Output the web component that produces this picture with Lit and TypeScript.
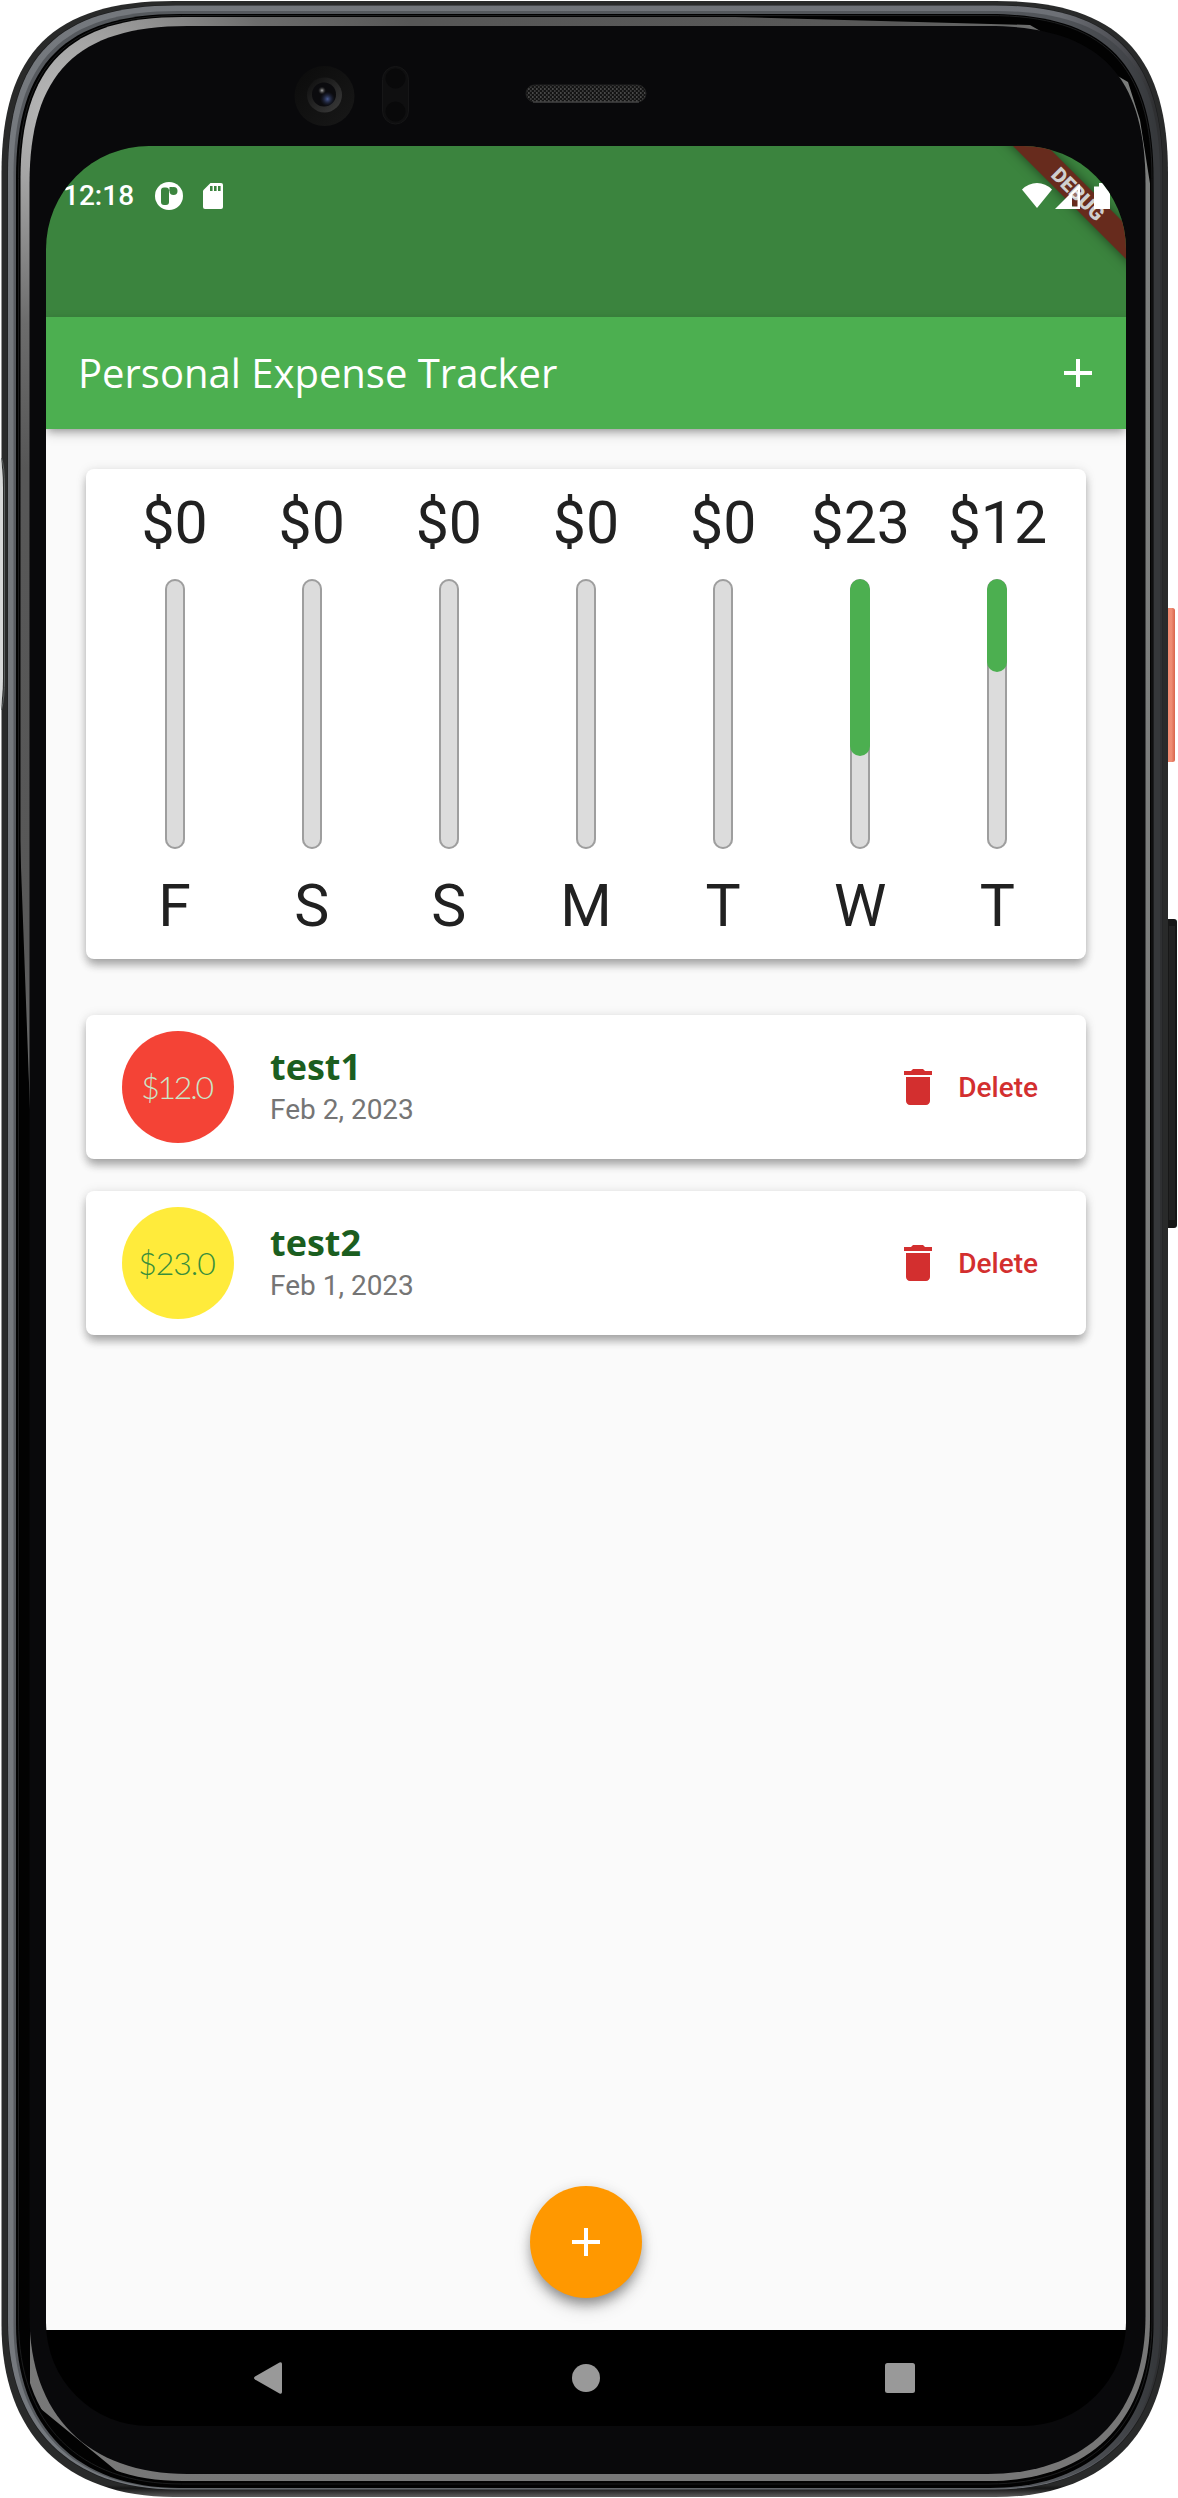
import { LitElement, html, svg, css } from "lit";
import { customElement, property } from "lit/decorators.js";

interface Transaction {
  title: string;
  amount: string;
  date: string;
  tone: "red" | "yellow";
}

interface DayTotal {
  label: string;
  total: number;
}

/** Closed outline with soft corners; kt and kb set how square the top and bottom corners are. */
function outline(x0: number, y0: number, x1: number, y1: number, r: number, kt = 0.7, kb = 0.63): string {
  const t = r * (1 - kt);
  const b = r * (1 - kb);
  return [
    `M${x0 + r} ${y0}H${x1 - r}`,
    `C${x1 - t} ${y0} ${x1} ${y0 + t} ${x1} ${y0 + r}`,
    `V${y1 - r}`,
    `C${x1} ${y1 - b} ${x1 - b} ${y1} ${x1 - r} ${y1}`,
    `H${x0 + r}`,
    `C${x0 + b} ${y1} ${x0} ${y1 - b} ${x0} ${y1 - r}`,
    `V${y0 + r}`,
    `C${x0} ${y0 + t} ${x0 + t} ${y0} ${x0 + r} ${y0}Z`,
  ].join("");
}

const plusIcon = html`<svg width="48" height="48" viewBox="0 0 24 24" fill="#fff">
  <path d="M19 13h-6v6h-2v-6H5v-2h6V5h2v6h6v2z" />
</svg>`;

@customElement("phone-body")
export class PhoneBody extends LitElement {
  static styles = css`
    :host { display: block; width: 1178px; height: 2498px; }
    svg { display: block; }
  `;

  render() {
    return html`<svg width="1178" height="2498" viewBox="0 0 1178 2498">
      ${svg`
      <defs>
        <linearGradient id="rim" gradientUnits="userSpaceOnUse" x1="0" y1="0" x2="1178" y2="0">
          <stop offset="0" stop-color="#75797e" /><stop offset=".9" stop-color="#6d7076" />
          <stop offset=".955" stop-color="#4a4b50" /><stop offset=".98" stop-color="#2f3032" />
        </linearGradient>
        <linearGradient id="shell" gradientUnits="userSpaceOnUse" x1="0" y1="2485" x2="0" y2="2498">
          <stop offset="0" stop-color="#292a2a" /><stop offset=".25" stop-color="#161616" />
          <stop offset="1" stop-color="#666" />
        </linearGradient>
        <radialGradient id="shine" gradientUnits="userSpaceOnUse" cx="60" cy="110" r="2400">
          <stop offset="0" stop-color="#b8b8b8" /><stop offset=".03" stop-color="#a5a5a5" />
          <stop offset=".09" stop-color="#6c6c6c" /><stop offset=".15" stop-color="#575757" />
          <stop offset=".35" stop-color="#585858" /><stop offset=".45" stop-color="#7c7e7d" />
          <stop offset="1" stop-color="#777" />
        </radialGradient>
        <linearGradient id="power" x1="0" y1="0" x2="1" y2="0">
          <stop offset="0" stop-color="#d9634c" /><stop offset=".3" stop-color="#ef8268" />
          <stop offset=".75" stop-color="#f08e75" /><stop offset="1" stop-color="#d9654d" />
        </linearGradient>
        <linearGradient id="housing" x1="0" y1="0" x2="1" y2="1">
          <stop offset="0" stop-color="#0b0b0b" /><stop offset="1" stop-color="#181818" />
        </linearGradient>
        <linearGradient id="lensring" x1="0" y1="0" x2="1" y2="1">
          <stop offset="0" stop-color="#0d0d0d" /><stop offset="1" stop-color="#3c3c3c" />
        </linearGradient>
        <radialGradient id="blue"><stop offset="0" stop-color="#4a5c94" /><stop offset="1" stop-color="#1a2038" stop-opacity="0" /></radialGradient>
        <radialGradient id="glint"><stop offset="0" stop-color="#aaa" /><stop offset="1" stop-color="#333" stop-opacity="0" /></radialGradient>
        <pattern id="mesh" width="4" height="4" patternUnits="userSpaceOnUse">
          <rect width="4" height="4" fill="#141414" />
          <rect width="1.600" height="2" fill="#484848" /><rect x="2" y="2" width="1.600" height="2" fill="#3a3a3a" />
        </pattern>
        <mask id="shinemask" maskUnits="userSpaceOnUse" x="0" y="0" width="1178" height="2498">
          <rect width="1178" height="2498" fill="#fff" />
          <path d="M20 840L30 1110V2400L130 2482L60 2498H0V840Z" fill="#000" />
          <path d="M620 14L1030 25L1128 82L1140 120L1151 190L1178 190V0H620Z" fill="#000" />
        </mask>
      </defs>
      <rect x="1160" y="608" width="15" height="154" rx="2.500" fill="url(#power)" />
      <rect x="1160" y="919" width="17" height="309" rx="3" fill="#171717" />
      <rect x="1169" y="926" width="6" height="294" fill="#222" />
      <path d=${outline(1.5, 1, 1168, 2497, 172)} fill="url(#shell)" />
      <path d=${outline(7.5, 5, 1163, 2490, 168)} fill="#1b1c1d" />
      <path d=${outline(8, 5.5, 1162.5, 2489.5, 168)} fill="url(#rim)" />
      <path d=${outline(13.5, 11, 1160, 2488.5, 164)} fill="#3d3f43" opacity=".55" />
      <path d=${outline(16, 14, 1153.5, 2488, 164)} fill="#020202" />
      <path d=${outline(18.5, 15.5, 1152, 2484, 163)} fill="none" stroke="#1c1d1e" stroke-width="1" />
      <path d=${outline(20.5, 17, 1150, 2481, 162)} fill="url(#shine)" mask="url(#shinemask)" />
      <path d=${outline(29.5, 26, 1145.5, 2474, 158)} fill="#09090b" />
      <path d="M0 458q3 8 3 30v190q0 20-3 32z" fill="#d8dada" />
      <path d="M1.500 458q3 8 3 30v190q0 20-3 32" fill="none" stroke="#5c6161" stroke-width="1" />
      <circle cx="324.500" cy="96" r="30" fill="url(#housing)" />
      <circle cx="324.500" cy="95" r="17.500" fill="url(#lensring)" />
      <circle cx="324" cy="94.500" r="12" fill="#0b0b0e" />
      <circle cx="327.500" cy="99" r="7.500" fill="url(#blue)" />
      <circle cx="322" cy="90.500" r="4" fill="url(#glint)" />
      <rect x="382.500" y="66.500" width="26" height="57.500" rx="13" fill="#0f0f10" stroke="#161617" />
      <circle cx="395.500" cy="78.500" r="10" fill="#09090a" />
      <circle cx="395.500" cy="111.500" r="10" fill="#09090a" />
      <rect x="526" y="85" width="120" height="17" rx="8.500" fill="url(#mesh)" stroke="#222" />
      <path d="M533 102h106" stroke="#555" />`}
    </svg>`;
  }
}

@customElement("status-bar")
export class StatusBar extends LitElement {
  static styles = css`
    :host {
      display: flex; align-items: flex-start; justify-content: space-between;
      height: 171px; box-sizing: border-box; padding: 33px 14px 0 17px;
      background: #3b843e; color: #fff; font: 500 28px/33px Roboto, sans-serif;
    }
    .side { display: flex; align-items: center; height: 33px; position: relative; z-index: 2; }
    .left { gap: 20px; }
    .time { width: 72px; white-space: nowrap; }
    .ribbon {
      position: absolute; z-index: 1; left: 932px; top: 35.500px; width: 200px; height: 24px;
      transform: rotate(45deg); background: #672b1d; box-shadow: 0 0 12px rgba(0, 0, 0, .5);
      color: #cfcfcf; font: 900 20.400px/24px Roboto, sans-serif; text-align: center;
    }
  `;

  render() {
    return html`
      <div class="side left">
        <span class="time">12:18</span>
        <svg width="28" height="28" viewBox="0 0 28 28">
          <circle cx="14" cy="14" r="14" fill="#fff" />
          <rect x="6" y="5.500" width="8" height="17.500" rx="3" fill="#3b843e" />
          <circle cx="18.500" cy="9" r="4" fill="#3b843e" />
          <rect x="14.500" y="5" width="3" height="4" fill="#3b843e" />
        </svg>
        <svg width="20" height="26" viewBox="0 0 20 26">
          <path d="M7.500 0H18a2 2 0 0 1 2 2v22a2 2 0 0 1-2 2H2a2 2 0 0 1-2-2V7.500z" fill="#fff" />
          <path d="M7 3h2.600v5H7zM11 3h2.600v5H11zM15 3h2.600v5H15z" fill="#3b843e" />
        </svg>
      </div>
      <div class="ribbon">DEBUG</div>
      <div class="side">
        <svg width="90" height="28" viewBox="0 0 90 28" fill="#fff">
          <path d="M0 7.500Q6.500 1 15 1T30 7.500L15 26z" />
          <path fill-rule="evenodd" d="M33 27L58 2V27zM50 13V24.500H55.500V8z" />
          <path d="M50 13V16h5.500V8z" opacity=".35" />
          <path d="M72 4.500h5V1h7v3.500h4V27H72z" />
        </svg>
      </div>
    `;
  }
}

@customElement("expense-chart")
export class ExpenseChart extends LitElement {
  @property({ attribute: false }) days: DayTotal[] = [];

  static styles = css`
    :host {
      display: flex; height: 490px; box-sizing: border-box; padding: 20px; border-radius: 8px;
      background: #fff; color: #212121; font: 400 59px/67.500px Roboto, sans-serif;
      box-shadow: 0 8px 10px -2px rgba(0, 0, 0, .2), 0 5px 10px rgba(0, 0, 0, .14), 0 1px 12px rgba(0, 0, 0, .1);
    }
    .day { flex: 1; min-width: 0; display: flex; flex-direction: column; align-items: center; gap: 22.500px; }
    .amount, .label { height: 67.500px; white-space: nowrap; }
    .track {
      width: 20px; height: 270px; border-radius: 10px; overflow: hidden; position: relative; background: #dcdcdc;
      box-shadow: inset 0 0 0 2px #9e9e9e;
    }
    .fill { border-radius: 10px; background: #4caf50; }
  `;

  render() {
    const sum = this.days.reduce((s, d) => s + d.total, 0);
    return this.days.map(
      (d) => html`<div class="day">
        <div class="amount">$${d.total}</div>
        <div class="track"><div class="fill" style="height:${sum ? (d.total / sum) * 270 : 0}px"></div></div>
        <div class="label">${d.label}</div>
      </div>`
    );
  }
}

@customElement("transaction-card")
export class TransactionCard extends LitElement {
  @property({ attribute: false }) item!: Transaction;

  static styles = css`
    :host {
      display: flex; align-items: center; height: 144px; box-sizing: border-box;
      padding: 0 48px 0 36px; border-radius: 8px; background: #fff;
      box-shadow: 0 8px 10px -2px rgba(0, 0, 0, .2), 0 5px 10px rgba(0, 0, 0, .14), 0 1px 12px rgba(0, 0, 0, .1);
    }
    .badge {
      width: 112px; height: 112px; box-sizing: border-box; padding-right: 3px; border-radius: 50%; display: flex;
      align-items: center; justify-content: center; font: 300 32px/40px Lato, sans-serif;
    }
    .red { background: #f44336; color: #c8e6c9; letter-spacing: -2.200px; }
    .yellow { background: #ffeb3b; color: #388e3c; letter-spacing: -1px; }
    .text { flex: 1; margin-left: 36px; }
    .title { font: 700 36px/48px "Open Sans", sans-serif; color: #1b5e20; margin-top: -6px; }
    .date { font: 400 28px/33px Roboto, sans-serif; color: #757575; margin-top: 2px; }
    .delete {
      display: flex; align-items: center; gap: 16px; padding: 0; border: 0; background: none;
      color: #d32f2f; font: 500 28px/33px Roboto, sans-serif;
    }
  `;

  render() {
    const t = this.item;
    return html`
      <div class="badge ${t.tone}">${t.amount}</div>
      <div class="text">
        <div class="title">${t.title}</div>
        <div class="date">${t.date}</div>
      </div>
      <button class="delete">
        <svg width="48" height="48" viewBox="0 0 24 24" fill="#d32f2f">
          <path d="M6 19c0 1.100.9 2 2 2h8c1.100 0 2-.9 2-2V7H6v12zM19 4h-3.500l-1-1h-5l-1 1H5v2h14V4z" />
        </svg>
        <span>Delete</span>
      </button>
    `;
  }
}

@customElement("app-root")
export class AppRoot extends LitElement {
  private days: DayTotal[] = [
    { label: "F", total: 0 },
    { label: "S", total: 0 },
    { label: "S", total: 0 },
    { label: "M", total: 0 },
    { label: "T", total: 0 },
    { label: "W", total: 23 },
    { label: "T", total: 12 },
  ];

  private items: Transaction[] = [
    { title: "test1", amount: "$12.0", date: "Feb 2, 2023", tone: "red" },
    { title: "test2", amount: "$23.0", date: "Feb 1, 2023", tone: "yellow" },
  ];

  static styles = css`
    :host { display: grid; width: 1178px; height: 2498px; overflow: hidden; background: #fff; }
    phone-body, .screen { grid-area: 1 / 1; }
    .screen {
      position: relative; display: flex; flex-direction: column; width: 1080px; height: 2280px;
      margin: 146px 0 0 46px; border-radius: 103px; overflow: hidden; background: #000;
    }
    .appbar {
      position: relative; z-index: 1; display: flex; align-items: center; justify-content: space-between;
      height: 112px; flex: none; box-sizing: border-box; padding: 0 24px 0 32px; background: #4caf50; color: #fff;
      font: 400 40px/54px "Open Sans", sans-serif;
      box-shadow: 0 4px 8px -2px rgba(0, 0, 0, .3), 0 5px 12px rgba(0, 0, 0, .15);
    }
    .appbar svg { display: block; }
    .body {
      flex: 1; display: flex; flex-direction: column; box-sizing: border-box;
      padding: 40px 40px 32px; background: #fafafa;
    }
    .list { display: flex; flex-direction: column; gap: 32px; margin-top: 56px; }
    .fab {
      display: flex; align-items: center; justify-content: center; align-self: center;
      width: 112px; height: 112px; margin-top: auto; padding: 0; border: 0; border-radius: 50%;
      background: #ff9800;
      box-shadow: 0 9px 12px -3px rgba(0, 0, 0, .3), 0 10px 18px rgba(0, 0, 0, .14), 0 1px 14px rgba(0, 0, 0, .1);
    }
    .nav { height: 96px; flex: none; display: grid; grid-template-columns: 1fr auto 1fr; align-items: center; }
    .nav svg { display: block; fill: #999; }
    .back { justify-self: start; margin-left: 208px; }
    .recent { justify-self: end; margin-right: 211px; }
  `;

  render() {
    return html`
      <phone-body></phone-body>
      <div class="screen">
        <status-bar></status-bar>
        <div class="appbar"><span>Personal Expense Tracker</span><span class="add">${plusIcon}</span></div>
        <div class="body">
          <expense-chart .days=${this.days}></expense-chart>
          <div class="list">
            ${this.items.map((i) => html`<transaction-card .item=${i}></transaction-card>`)}
          </div>
          <button class="fab">${plusIcon}</button>
        </div>
        <div class="nav">
          <svg class="back" width="28" height="32" viewBox="0 0 28 32">
            <path d="M1 14.500L25.500.5Q28-.5 28 2V30Q28 32.500 25.500 31.500L1 17.500Q-1 16 1 14.500z" />
          </svg>
          <svg width="28" height="28" viewBox="0 0 28 28"><circle cx="14" cy="14" r="14" /></svg>
          <svg class="recent" width="30" height="30" viewBox="0 0 30 30"><rect width="30" height="30" rx="2.500" /></svg>
        </div>
      </div>
    `;
  }
}
